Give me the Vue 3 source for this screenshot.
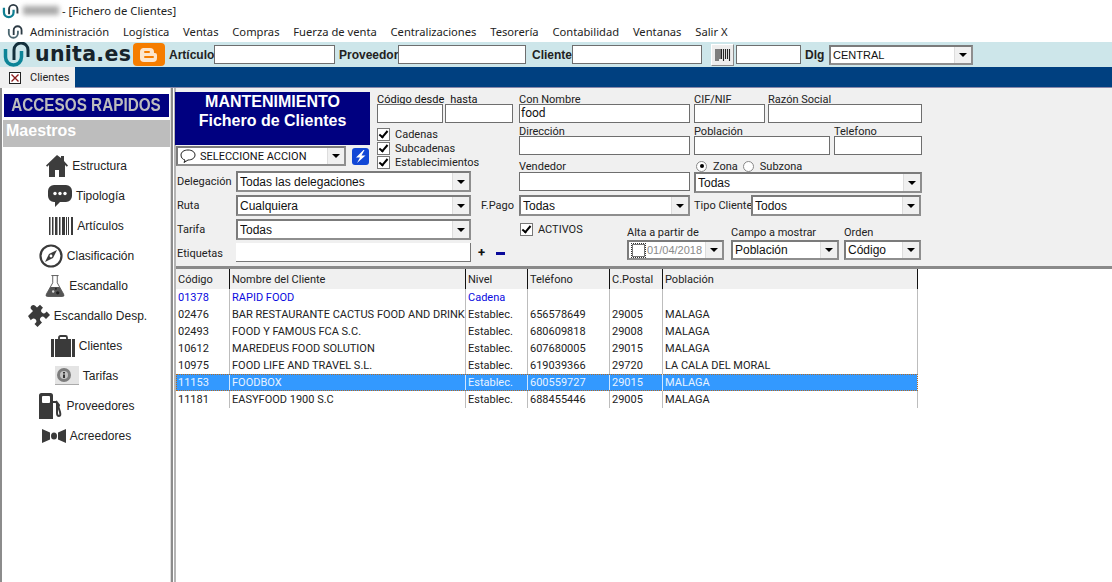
<script setup>
const menu = ['Administración','Logística','Ventas','Compras','Fuerza de venta','Centralizaciones','Tesorería','Contabilidad','Ventanas','Salir X']
const side = [
  {k:'house',t:'Estructura'},{k:'chat',t:'Tipología'},{k:'bars',t:'Artículos'},{k:'compass',t:'Clasificación'},
  {k:'flask',t:'Escandallo'},{k:'puzzle',t:'Escandallo Desp.'},{k:'case',t:'Clientes'},{k:'info',t:'Tarifas'},
  {k:'fuel',t:'Proveedores'},{k:'bow',t:'Acreedores'}
]
const cols = ['Código','Nombre del Cliente','Nivel','Teléfono','C.Postal','Población']
const rows = [
  {c:['01378','RAPID FOOD','Cadena','','',''],blue:true},
  {c:['02476','BAR RESTAURANTE CACTUS FOOD AND DRINK','Establec.','656578649','29005','MALAGA']},
  {c:['02493','FOOD Y FAMOUS FCA S.C.','Establec.','680609818','29008','MALAGA']},
  {c:['10612','MAREDEUS FOOD SOLUTION','Establec.','607680005','29015','MALAGA']},
  {c:['10975','FOOD LIFE AND TRAVEL S.L.','Establec.','619039366','29720','LA CALA DEL MORAL']},
  {c:['11153','FOODBOX','Establec.','600559727','29015','MALAGA'],sel:true},
  {c:['11181','EASYFOOD 1900 S.C','Establec.','688455446','29005','MALAGA']}
]
const checks = ['Cadenas','Subcadenas','Establecimientos']
</script>

<template>
  <div class="app">
    <div class="titlebar">
      <svg class="swirl" viewBox="0 0 28 24" width="18" height="16"><path d="M3 7v7a7.500 7.500 0 0 0 15 0V10" fill="none" stroke="#0f7f92" stroke-width="3.500"/><path d="M11 17V9a6.500 6.500 0 0 1 13 0v7" fill="none" stroke="#2c3a44" stroke-width="3"/></svg>
      <span class="blur"></span>
      <span class="title">- [Fichero de Clientes]</span>
    </div>
    <div class="menubar">
      <svg class="swirl" viewBox="0 0 28 24" width="17" height="16"><path d="M3 7v7a7.500 7.500 0 0 0 15 0V10" fill="none" stroke="#4b6670" stroke-width="3"/><path d="M11 17V9a6.500 6.500 0 0 1 13 0v7" fill="none" stroke="#2c3a44" stroke-width="3"/></svg>
      <span v-for="m in menu" :key="m" class="mi">{{ m }}</span>
    </div>
    <div class="toolbar">
      <svg class="logo" viewBox="0 0 30 25" width="30" height="25"><path d="M2.500 7v8a8 8 0 0 0 16 0V9" fill="none" stroke="#0d8497" stroke-width="3.500"/><path d="M11 18V8a7 7 0 0 1 14 0v7" fill="none" stroke="#14303c" stroke-width="3"/></svg>
      <span class="brand">unita.es</span>
      <svg class="blogger" viewBox="0 0 32 23" width="32" height="23"><rect width="32" height="23" rx="4" fill="#f57d00"/><path d="M10 5h7a4 4 0 0 1 4 4v1h1a2 2 0 0 1 2 2v3a4 4 0 0 1-4 4h-9a4 4 0 0 1-4-4V9a4 4 0 0 1 3-4z" fill="#fde6cd"/><rect x="11" y="8" width="6" height="2" rx="1" fill="#f57d00"/><rect x="11" y="13" width="10" height="2" rx="1" fill="#f57d00"/></svg>
      <span class="tl art">Artículo</span><div class="input t1"></div>
      <span class="tl prov">Proveedor</span><div class="input t2"></div>
      <span class="tl cli">Cliente</span><div class="input t3"></div>
      <div class="barbtn">
        <svg viewBox="0 0 16 12" width="16" height="12"><path d="M1 0v12M3 0v12M5 0v10M6.500 0v10M8.500 0v12M10.500 0v10M12.500 0v10M14.500 0v12" stroke="#222" stroke-width="1.100"/></svg>
      </div>
      <div class="input t4"></div>
      <span class="tl dlg">Dlg</span>
      <div class="select t5"><span>CENTRAL</span><i class="arrow"></i></div>
    </div>
    <div class="tabbar">
      <div class="tab">
        <svg viewBox="0 0 12 12" width="12" height="12"><rect x=".5" y=".5" width="11" height="11" fill="#fff" stroke="#222"/><path d="M2.500 2.500l7 7M9.500 2.500l-7 7" stroke="#8c1c1c" stroke-width="1.400"/></svg>
        <span>Clientes</span>
      </div>
    </div>

    <div class="main">
      <aside class="sidebar">
        <div class="acc"><span>ACCESOS RAPIDOS</span></div>
        <div class="maes">Maestros</div>
        <div class="items">
          <div v-for="s in side" :key="s.t" class="item">
            <svg v-if="s.k==='house'" viewBox="0 0 22 22" width="22" height="22" fill="#3d3d3d"><path d="M11 0L0 10.500l1.200 1.300L3 10v12h6v-7h4v7h6V10l1.800 1.800 1.200-1.300L18 6V1h-3v2z"/></svg>
            <svg v-else-if="s.k==='chat'" viewBox="0 0 24 22" width="24" height="22"><path d="M6 0h12a6 6 0 0 1 6 6v5a6 6 0 0 1-6 6h-6l-5 5v-5H6a6 6 0 0 1-6-6V6a6 6 0 0 1 6-6z" fill="#3a3a3a"/><circle cx="7" cy="8.500" r="1.700" fill="#fff"/><circle cx="12" cy="8.500" r="1.700" fill="#fff"/><circle cx="17" cy="8.500" r="1.700" fill="#fff"/></svg>
            <svg v-else-if="s.k==='bars'" viewBox="0 0 24 18" width="24" height="18" fill="#3a3a3a"><rect x="0" width="1.500" height="18"/><rect x="3" width="1.500" height="18"/><rect x="6" width="2.500" height="18"/><rect x="10" width="1.500" height="18"/><rect x="13" width="3" height="18"/><rect x="17" width="1" height="18"/><rect x="19" width="1" height="18"/><rect x="22" width="2" height="18"/></svg>
            <svg v-else-if="s.k==='compass'" viewBox="0 0 24 24" width="24" height="24"><circle cx="12" cy="12" r="10.500" fill="none" stroke="#3a3a3a" stroke-width="2.200"/><path d="M18 6l-4 8-8 4 4-8z" fill="#3a3a3a"/><circle cx="12" cy="12" r="1.400" fill="#fff"/></svg>
            <svg v-else-if="s.k==='flask'" viewBox="0 0 22 24" width="20" height="24"><path d="M7 .5h8M8.500 .5v8L1.500 21a1.800 1.800 0 0 0 1.500 2.500h16a1.800 1.800 0 0 0 1.500-2.500L13.500 8.500v-8" fill="none" stroke="#555" stroke-width="1"/><path d="M6 13h10l5 9a1 1 0 0 1-1 1.500H2a1 1 0 0 1-1-1.500z" fill="#555"/><circle cx="9" cy="18" r="1.300" fill="#ddd"/><circle cx="14" cy="19.500" r="1.800" fill="#222"/><circle cx="12" cy="15" r="1" fill="#222"/></svg>
            <svg v-else-if="s.k==='puzzle'" viewBox="0 0 24 24" width="24" height="24" fill="#3a3a3a"><path d="M2 12l5-5-1.500-1.500a2.600 2.600 0 1 1 3.700-3.700L11 3.500 14 .8l3 3-1 1a2.600 2.600 0 1 0 3.700 3.700l1-1L24 11l-4 4-1.500-1.500a2.600 2.600 0 1 0-3.700 3.700L16 18.500l-4.500 4.500-3-3 1-1a2.600 2.600 0 1 0-3.700-3.700l-1 1z"/></svg>
            <svg v-else-if="s.k==='case'" viewBox="0 0 24 22" width="24" height="22"><path d="M8 5V2.500A1.500 1.500 0 0 1 9.500 1h5A1.500 1.500 0 0 1 16 2.500V5" fill="none" stroke="#3a3a3a" stroke-width="1.800"/><rect y="4" width="3" height="18" fill="#3a3a3a"/><rect x="4" y="4" width="16" height="18" fill="#3a3a3a"/><rect x="21" y="4" width="3" height="18" fill="#3a3a3a"/></svg>
            <svg v-else-if="s.k==='info'" viewBox="0 0 24 20" width="24" height="20"><rect width="24" height="18" fill="#e4e4e4"/><rect y="18" width="24" height="1" fill="#aaa"/><circle cx="9" cy="9" r="7" fill="#7d7d7d"/><circle cx="9" cy="9" r="4" fill="#c4c4c4"/><path d="M8 6h2v1.500H8zM8 8.500h2V12H8z" fill="#333"/></svg>
            <svg v-else-if="s.k==='fuel'" viewBox="0 0 24 26" width="24" height="26"><path d="M1 2.500A2.500 2.500 0 0 1 3.500 0h9A2.500 2.500 0 0 1 15 2.500V26H1z" fill="#3a3a3a"/><rect x="4" y="3" width="8" height="7" rx="1" fill="#fff"/><path d="M15 9h2.500q1.500 0 1.500 2v9q0 3 2 3t1-4l-1-3q-1-2 0-4l-3-4" fill="none" stroke="#3a3a3a" stroke-width="2"/></svg>
            <svg v-else viewBox="0 0 24 14" width="24" height="14" fill="#3a3a3a"><path d="M0 0l8 3.500v7L0 14zM24 0l-8 3.500v7L24 14z"/><ellipse cx="12" cy="7" rx="3" ry="3.500"/></svg>
            <span>{{ s.t }}</span>
          </div>
        </div>
      </aside>

      <section class="content">
        <div class="form">
          <div class="fleft">
            <div class="ftop">
              <div class="fhead">
                <div class="mant"><div>MANTENIMIENTO</div><div>Fichero de Clientes</div></div>
                <div class="actionrow">
                  <div class="select action">
                    <svg viewBox="0 0 16 14" width="16" height="14"><path d="M8 1C4 1 1 3 1 6s2 4.500 4 5l-1 2.500L8 11c4 0 7-2 7-5s-3-5-7-5z" fill="none" stroke="#222"/></svg>
                    <span>SELECCIONE ACCION</span><i class="arrow"></i>
                  </div>
                  <svg class="bolt" viewBox="0 0 17 17" width="17" height="17"><rect width="17" height="17" rx="3" fill="#1147d6"/><path d="M11.500 2L4 9.500h4L5 15l8.500-7.500h-4l3-5.500z" fill="#fff"/></svg>
                </div>
              </div>
              <div class="fcodes">
                <div class="codelabels"><span>Código desde</span><span>hasta</span></div>
                <div class="coderow"><div class="input c1"></div><div class="input c2"></div></div>
                <div class="checks">
                  <label v-for="c in checks" :key="c" class="chk"><i class="box"></i>{{ c }}</label>
                </div>
              </div>
            </div>
            <div class="frow"><span class="rl">Delegación</span><div class="select s235"><span>Todas las delegaciones</span><i class="arrow"></i></div></div>
            <div class="frow"><span class="rl">Ruta</span><div class="select s235"><span>Cualquiera</span><i class="arrow"></i></div><span class="fpago">F.Pago</span></div>
            <div class="frow"><span class="rl">Tarifa</span><div class="select s235"><span>Todas</span><i class="arrow"></i></div></div>
            <div class="frow etqrow"><span class="rl">Etiquetas</span><div class="etq"></div><b class="plus">+</b><i class="minus"></i></div>
          </div>

          <div class="fright">
            <div class="r1">
              <div class="field w171"><span class="fl">Con Nombre</span><div class="input">food</div></div>
              <div class="field cif"><span class="fl">CIF/NIF</span><div class="input"></div></div>
              <div class="field raz"><span class="fl">Razón Social</span><div class="input"></div></div>
            </div>
            <div class="r2">
              <div class="field w171"><span class="fl">Dirección</span><div class="input"></div></div>
              <div class="field pob"><span class="fl">Población</span><div class="input"></div></div>
              <div class="field tel"><span class="fl">Telefono</span><div class="input"></div></div>
            </div>
            <div class="r3">
              <div class="field w171"><span class="fl vend">Vendedor</span><div class="input"></div></div>
              <div class="field w228">
                <div class="radios"><i class="radio on"></i><span>Zona</span><i class="radio"></i><span>Subzona</span></div>
                <div class="select h21"><span>Todas</span><i class="arrow"></i></div>
              </div>
            </div>
            <div class="r4">
              <div class="select w171 h21"><span>Todas</span><i class="arrow"></i></div>
              <span class="tipo">Tipo Cliente</span>
              <div class="select tipos h21"><span>Todos</span><i class="arrow"></i></div>
            </div>
            <div class="r5">
              <label class="chk act"><i class="box"></i>ACTIVOS</label>
              <div class="field alta"><span class="fl2">Alta a partir de</span>
                <div class="select h20 date"><i class="dbox"></i><span>01/04/2018</span><i class="arrow"></i></div></div>
              <div class="field campo"><span class="fl2">Campo a mostrar</span>
                <div class="select h20"><span>Población</span><i class="arrow"></i></div></div>
              <div class="field orden"><span class="fl2">Orden</span>
                <div class="select h20"><span>Código</span><i class="arrow"></i></div></div>
            </div>
          </div>
        </div>

        <div class="grid">
          <div class="ghead">
            <div v-for="c in cols" :key="c" class="cell">{{ c }}</div>
          </div>
          <div v-for="r in rows" :key="r.c[0]" class="grow" :class="{blue:r.blue,sel:r.sel}">
            <div v-for="(v,i) in r.c" :key="i" class="cell">{{ v }}</div>
          </div>
        </div>
      </section>
    </div>
  </div>
</template>

<style scoped>
.app{width:1112px;height:582px;overflow:hidden;background:#fff;font-family:Roboto,"Liberation Sans",Arial,sans-serif;font-size:11px;color:#111;display:flex;flex-direction:column}
.titlebar{height:21px;display:flex;align-items:center;padding-left:2px;font-family:"Noto Sans",sans-serif;font-size:11.300px;color:#222}
.blur{width:36px;height:9px;margin:0 3px 0 3px;background:#a9a9a9;filter:blur(2.500px)}
.menubar{height:21px;display:flex;align-items:center;padding-left:7px;font-family:"Noto Sans",sans-serif;font-size:11.200px;color:#222}
.menubar .swirl{margin-right:6px}
.mi{margin-right:13.800px;white-space:nowrap}
.toolbar{height:25px;background:#cde6ea;display:flex;align-items:center;flex:none}
.logo{margin-left:3px;flex:none}
.brand{width:97px;margin-left:2px;font-family:"DejaVu Sans",sans-serif;font-weight:700;font-size:20.500px;letter-spacing:.3px;line-height:25px;color:#16232b;white-space:nowrap}
.blogger{flex:none;margin-left:1px;margin-right:4px}
.tl{font-family:"Liberation Sans",sans-serif;font-weight:700;font-size:12px;color:#222;white-space:nowrap}
.art{width:45px}
.prov{width:59px;margin-left:4px}
.cli{width:40px;margin-left:6px}
.dlg{width:24px;margin-left:4px}
.input{box-sizing:border-box;height:19px;background:#fff;border:1px solid #6e6e6e;padding:0 1px;line-height:17px;font-size:12px;color:#111}
.t1{width:121px}
.t2{width:128px}
.t3{width:130px}
.t4{width:65px}
.barbtn{box-sizing:border-box;width:23px;height:22px;margin:0 2px 0 9px;background:#ededed;border:1px solid;border-color:#fff #8a8a8a #8a8a8a #fff;display:flex;align-items:center;justify-content:center}
.select{box-sizing:border-box;height:21px;background:#fff;border:2px solid;border-color:#7b7b7b #8e8e8e #8e8e8e #7b7b7b;display:flex;align-items:center;padding-left:2px;position:relative;font-family:"Liberation Sans",sans-serif;font-size:12px;color:#111;white-space:nowrap}
.select>span{flex:1;overflow:hidden}
.arrow{flex:none;box-sizing:border-box;align-self:stretch;width:17px;background:#f0f0f0;border-left:1px solid #ddd;position:relative}
.arrow::after{content:"";position:absolute;left:4px;top:50%;margin-top:-2px;border:4px solid transparent;border-top:4px solid #000;border-bottom:0}
.t5{width:144px;height:20px;font-size:11px}
.tabbar{height:21px;background:#004080;flex:none;box-shadow:inset 0 -1px 0 #88a}
.tab{box-sizing:border-box;width:75px;height:21px;background:#f0f0f0;display:flex;align-items:center;padding-left:9px;gap:9px;font-size:11px;color:#222}
.main{flex:1;display:flex;min-height:0;background:#fff}
.sidebar{box-sizing:border-box;width:173px;flex:none;border-left:2px solid #8c8c8c;border-right:2px solid #8c8c8c;padding:5px 0 0 1px;display:flex;flex-direction:column;background:#fff;box-shadow:inset -1px 0 0 #ddd}
.acc{box-sizing:border-box;height:25px;width:167px;background:#000080;border:1px solid #fff;outline:1px solid #000080;outline-offset:-2px;display:flex;align-items:center;justify-content:center;color:#bdbdbd;font-family:"Liberation Sans",sans-serif;font-weight:700;font-size:18px;white-space:nowrap}
.acc span{display:inline-block;transform:scaleX(.85)}
.maes{box-sizing:border-box;height:27px;width:167px;margin-top:2px;background:#bdbdbd;color:#fff;font-family:"Liberation Sans",sans-serif;font-weight:700;font-size:16px;padding:2px 0 0 3px}
.items{padding-top:4px;width:167px}
.item{height:30px;display:flex;align-items:center;justify-content:center;gap:4px;font-family:"Liberation Sans",sans-serif;font-size:12px;color:#222;white-space:nowrap}
.item svg{flex:none}
.content{flex:1;display:flex;flex-direction:column;min-width:0;border-left:2px solid #b5b5b5;margin-left:1px}
.form{box-sizing:border-box;height:181px;flex:none;background:#f0f0f0;border-bottom:3px solid #8a8a8a;display:flex;padding-left:0}
.fleft{width:343px;flex:none;padding-top:4px}
.ftop{display:flex;height:79px}
.fhead{width:195px;flex:none}
.mant{height:53px;width:195px;margin-left:-1px;background:#000080;color:#fff;font-family:"Liberation Sans",sans-serif;font-weight:700;font-size:16px;line-height:19px;text-align:center;box-sizing:border-box}
.actionrow{display:flex;align-items:center;margin-top:1px}
.action{width:170px;height:20px;font-family:Roboto,sans-serif;font-size:11px;gap:4px}
.action svg{flex:none}
.action span{padding-top:1px}
.bolt{margin-left:6px;flex:none}
.fcodes{margin-left:6px;flex:none;width:140px}
.codelabels{display:flex;height:12px;padding-top:3px;box-sizing:content-box;height:9px;line-height:10px;gap:6px}
.coderow{display:flex;gap:2px}
.c1{width:66px}
.c2{width:68px}
.checks{display:flex;flex-direction:column;margin-top:4px}
.chk{display:flex;align-items:center;height:14px;font-size:11px;color:#222}
.chk .box{box-sizing:border-box;width:13px;height:13px;background:#fff;border:1px solid #777;margin-right:5px;position:relative;flex:none}
.chk .box::after{content:"";position:absolute;left:3px;top:0;width:3px;height:7px;border:solid #000;border-width:0 2px 2px 0;transform:rotate(40deg)}
.frow{display:flex;align-items:center;height:21px;margin-bottom:3px;position:relative}
.etqrow{margin-top:-1px}
.rl{width:60px;padding-left:1px;box-sizing:border-box;font-size:11px;color:#222}
.etqrow .rl{padding-top:2px}
.s235{width:235px}
.fpago{margin-left:10px;font-size:11px;color:#222}
.etq{width:235px;height:19px;box-sizing:border-box;background:#fff;border-bottom:1px solid #777;border-right:1px solid #777}
.plus{margin-left:7px;font-size:13px;line-height:10px;color:#111}
.minus{margin-left:11px;width:9px;height:3px;background:#0a0a9a;margin-top:1px}
.fright{width:403px;flex:none;padding-top:6px}
.field{display:flex;flex-direction:column;flex:none}
.fl{height:10px;line-height:12px;color:#222;font-size:11px;white-space:nowrap}
.vend{height:12px;line-height:14px}
.fl2{height:14px;line-height:14px;color:#222;font-size:11px;white-space:nowrap}
.w171{width:171px}
.w228{width:228px}
.r1{display:flex;height:32px}
.r2{display:flex;height:34px}
.r3{display:flex;height:35px;gap:4px}
.cif{width:71px;margin-left:4px}
.raz{width:154px;margin-left:3px}
.pob{width:136px;margin-left:4px}
.tel{width:88px;margin-left:4px}
.radios{display:flex;align-items:center;height:12px;font-size:11px;color:#222}
.radio{box-sizing:border-box;width:11px;height:11px;border-radius:50%;background:#fff;border:1px solid #888;margin:0 6px 0 2px;position:relative;flex:none}
.radio+span+.radio{margin:0 6px 0 5px}
.radio.on::after{content:"";position:absolute;left:2.500px;top:2.500px;width:4px;height:4px;border-radius:50%;background:#000}
.h21{height:21px}
.h20{height:20px}
.r4{display:flex;align-items:center;height:21px}
.tipo{margin-left:4px;width:57px;white-space:nowrap;font-size:11px;color:#222}
.tipos{width:170px}
.r5{display:flex;padding-top:6px;align-items:flex-start}
.act{width:107px;margin-left:1px;height:14px}
.alta{width:97px;padding-top:4px;margin-right:7px}
.campo{width:108px;padding-top:4px;margin-right:5px}
.orden{width:77px;padding-top:4px}
.date{color:#8a8a8a;padding-left:1px;font-size:11px}
.date span{overflow:visible}
.dbox{box-sizing:border-box;width:13px;height:13px;background:#fff;border:1px solid #777;outline:1px dotted #333;margin:0 2px 0 2px;flex:none}
.grid{font-size:11px;color:#222}
.ghead,.grow{display:grid;grid-template-columns:54px 236px 62px 82px 53px 255px;width:742px}
.ghead{height:20px;background:#f0f0f0}
.ghead .cell{border-right:1px solid #111;line-height:22px}
.grow{height:17px}
.grow .cell{border-right:1px solid #bdbdbd;line-height:17px}
.cell{box-sizing:border-box;padding-left:2px;white-space:nowrap;overflow:hidden}
.blue{color:#0a0ae0}
.sel{background:#3399ff;color:#e8f3ff;outline:1px dotted #b86a1e;outline-offset:-1px}
.sel .cell{border-right-color:#cfe6ff}
</style>
